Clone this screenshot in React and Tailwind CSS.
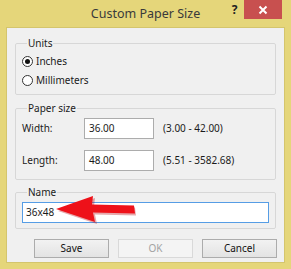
import React from "react";

function Radio({ checked, label }) {
  return (
    <div className="flex items-center h-[19px]">
      <span className="w-[11px] h-[11px] rounded-full border border-[#333] bg-white flex items-center justify-center">
        {checked && <span className="w-[5px] h-[5px] rounded-full bg-[#111]" />}
      </span>
      <span className="ml-[3px]">{label}</span>
    </div>
  );
}

function Group({ title, className, children }) {
  return (
    <fieldset className={"border border-[#d7d7d7] rounded-[2px] mx-[8px] px-[6px] " + className}>
      <legend className="ml-[5px] px-[1px] leading-[16px]">{title}</legend>
      {children}
    </fieldset>
  );
}

function Btn({ children, disabled }) {
  return (
    <div
      className={
        "w-[75px] h-[19px] flex items-center justify-center border " +
        (disabled
          ? "border-[#d9d9d9] bg-[#f4f4f4] text-[#a3a3a3]"
          : "border-[#acacac] bg-gradient-to-b from-[#f2f2f2] to-[#e3e3e3] text-[#111]")
      }
    >
      {children}
    </div>
  );
}

export default function App() {
  return (
    <div
      className="relative w-[291px] h-[269px] bg-[#e5d67a] flex flex-col text-[10px] text-[#1b1b1b]"
      style={{ fontFamily: '"Noto Sans", "Liberation Sans", sans-serif' }}
    >
      <div className="h-[27px] flex items-start">
        <div className="w-[66px]" />
        <div className="flex-1 text-center text-[12.5px] text-[#3a3a3a] leading-[27px]">
          Custom Paper Size
        </div>
        <div className="w-[66px] flex items-start">
          <div className="w-[19px] h-[20px] flex items-center justify-center text-[12px] font-bold text-[#222]">?</div>
          <div className="w-[38px] h-[19px] bg-[#c8504f] flex items-center justify-center">
            <svg width="10" height="10" viewBox="0 0 10 10">
              <path d="M1.5 1.5 L8.5 8.5 M8.5 1.5 L1.5 8.5" stroke="#fff" strokeWidth="2" />
            </svg>
          </div>
        </div>
      </div>
      <div className="mx-[6px] mb-[6px] flex-1 border border-[#d4c56d] bg-[#f0f0f0] flex flex-col">
        <Group title="Units" className="mt-[7px] h-[60px]">
          <div className="flex flex-col mt-[1px]">
            <Radio checked label="Inches" />
            <Radio label="Millimeters" />
          </div>
        </Group>
        <Group title="Paper size" className="mt-[5px] h-[80px]">
          <div className="flex flex-col gap-[11px] mt-[2px]">
            <div className="flex items-center">
              <span className="w-[62px]">Width:</span>
              <div className="w-[70px] h-[21px] border border-[#acacac] bg-white px-[4px] leading-[19px]">36.00</div>
              <span className="ml-[9px]">(3.00 - 42.00)</span>
            </div>
            <div className="flex items-center">
              <span className="w-[62px]">Length:</span>
              <div className="w-[70px] h-[21px] border border-[#acacac] bg-white px-[4px] leading-[19px]">48.00</div>
              <span className="ml-[9px]">(5.51 - 3582.68)</span>
            </div>
          </div>
        </Group>
        <Group title="Name" className="mt-[4px] h-[45px]">
          <div className="mt-[2px] h-[21px] border border-[#569de5] bg-white px-[3px] leading-[19px]">36x48</div>
        </Group>
        <div className="flex justify-end gap-[9px] mt-[10px] mr-[7px]">
          <Btn>Save</Btn>
          <Btn disabled>OK</Btn>
          <Btn>Cancel</Btn>
        </div>
      </div>
      <svg className="absolute left-0 top-0 pointer-events-none" width="291" height="269" viewBox="0 0 291 269">
        <polygon points="57,210 94,197 93,205.5 134,206.5 135,214.5 94,213.5 96,223" fill="#b80a12" opacity="0.35" transform="translate(1,1)" />
        <polygon points="56,209 93,196 92,204.5 134,205.5 135,213.5 93,212.5 95,222" fill="#ee1119" />
      </svg>
    </div>
  );
}
